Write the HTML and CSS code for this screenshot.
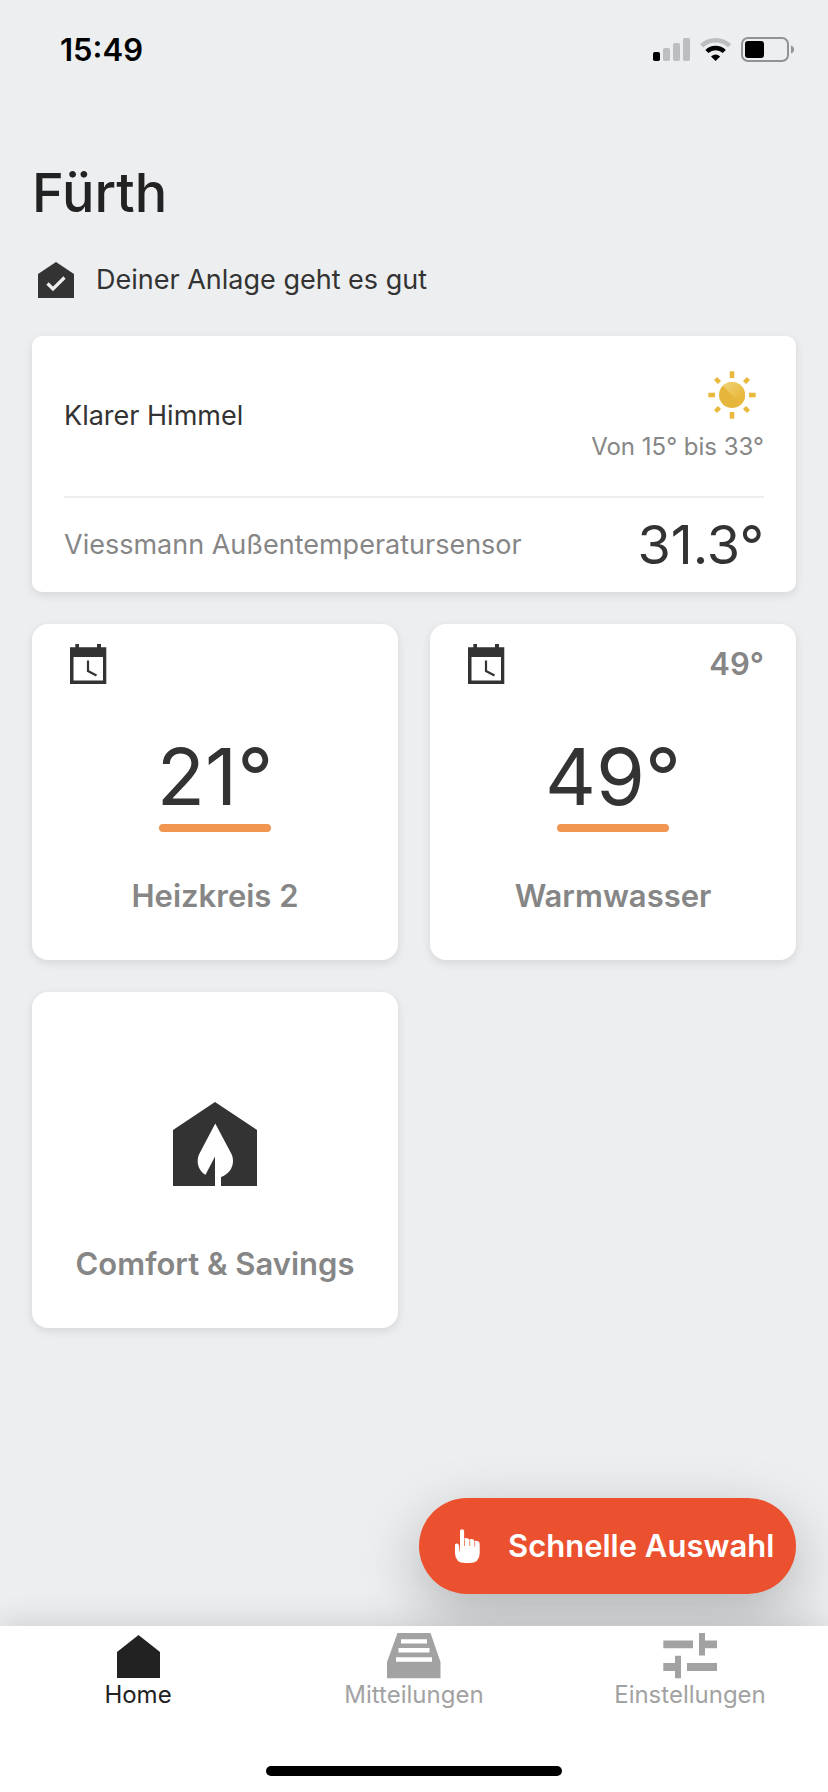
FILE: index.html
```html
<!DOCTYPE html>
<html lang="de">
<head>
<meta charset="utf-8">
<title>Fürth</title>
<link rel="stylesheet" href="styles.css">
</head>
<body>
<div class="screen">
  <header class="status">
    <span class="clock">15:49</span>
    <svg class="status-icons" width="142" height="26" viewBox="0 0 142 26">
      <rect x="0" y="15" width="7" height="9" rx="1.8" fill="#000"/>
      <g fill="#bdbec0"><rect x="10" y="11" width="7" height="13" rx="1.8"/><rect x="20" y="6" width="7" height="18" rx="1.8"/><rect x="30" y="1" width="7" height="23" rx="1.8"/></g>
      <path d="M48.6 8.8A20.4 20.4 0 0 1 76.6 8.8" fill="none" stroke="#bdbec0" stroke-width="4.6"/>
      <path d="M53.9 14.5A12.6 12.6 0 0 1 71.3 14.5" fill="none" stroke="#000" stroke-width="4.4"/>
      <path d="M58 19.4Q62.6 15.8 67.200 19.400L62.600 24Z" fill="#000"/>
      <rect x="89" y="1" width="46" height="23" rx="6" fill="none" stroke="#919294" stroke-width="2"/>
      <rect x="92" y="4" width="19" height="17" rx="3" fill="#000"/>
      <path d="M138 8.500Q141 9.500 141 12.500T138 16.500Z" fill="#919294"/>
    </svg>
  </header>

  <main class="content">
    <h1 class="title">Fürth</h1>
    <div class="health">
      <svg width="36" height="36" viewBox="0 0 36 36"><path d="M0 12L18 0L36 12V36H0Z" fill="#333"/><path d="M9.500 21.500L15 27L26.500 15.500" fill="none" stroke="#edeef0" stroke-width="3.200"/></svg>
      <span class="health-text">Deiner Anlage geht es gut</span>
    </div>

    <section class="card weather">
      <div class="weather-top">
        <span class="condition">Klarer Himmel</span>
        <div class="forecast">
          <svg class="sun" width="48" height="48" viewBox="0 0 48 48">
            <defs><linearGradient id="shine" x1="0" y1="0" x2="1" y2="1"><stop offset="0" stop-color="#f1d27a"/><stop offset=".75" stop-color="#e9b93e"/></linearGradient></defs>
            <circle cx="24" cy="24" r="13" fill="#e6b63c"/>
            <path d="M14.800 14.800A13 13 0 0 1 33.200 33.200Z" fill="url(#shine)"/>
            <g fill="#e9b93e">
              <path id="ray" d="M21.700 0.300H26.300V7H21.700Z"/>
              <use href="#ray" transform="rotate(90 24 24)"/><use href="#ray" transform="rotate(180 24 24)"/><use href="#ray" transform="rotate(270 24 24)"/>
              <path id="ray2" d="M21.800 0.700H26.200V6.300H21.800Z" transform="rotate(45 24 24)"/>
              <use href="#ray2" transform="rotate(90 24 24)"/><use href="#ray2" transform="rotate(180 24 24)"/><use href="#ray2" transform="rotate(270 24 24)"/>
            </g>
          </svg>
          <span class="range">Von 15° bis 33°</span>
        </div>
      </div>
      <div class="weather-bottom">
        <span class="sensor">Viessmann Außentemperatursensor</span>
        <span class="outdoor">31.3<span class="deg">°</span></span>
      </div>
    </section>

    <div class="grid">
      <section class="card tile">
        <div class="tile-head">
          <svg width="37" height="40" viewBox="0 0 37 40"><path fill-rule="evenodd" d="M0 3.300H5.300V0H9V3.300H27V0H31V3.300H36.300V40H0ZM3.500 13V36.500H33V13Z" fill="#333"/><path d="M18 16.500V27L26.500 31.500" fill="none" stroke="#333" stroke-width="2.200"/></svg>
        </div>
        <div class="reading">21<span class="deg">°</span></div>
        <div class="bar"></div>
        <div class="label heat">Heizkreis 2</div>
      </section>
      <section class="card tile">
        <div class="tile-head">
          <svg width="37" height="40" viewBox="0 0 37 40"><path fill-rule="evenodd" d="M0 3.300H5.300V0H9V3.300H27V0H31V3.300H36.300V40H0ZM3.500 13V36.500H33V13Z" fill="#333"/><path d="M18 16.500V27L26.500 31.500" fill="none" stroke="#333" stroke-width="2.200"/></svg>
          <span class="target">49°</span>
        </div>
        <div class="reading">49<span class="deg">°</span></div>
        <div class="bar"></div>
        <div class="label water">Warmwasser</div>
      </section>
      <section class="card tile eco">
        <svg class="eco-icon" width="84" height="84" viewBox="0 0 84 84"><path d="M0 28L42 0L84 28V84H48V75C55 72.500 60 66.500 60 59C60 56 59.200 53 57.700 50.500L42.300 21.500L27 50.500C25.500 53 24.700 56 24.700 59C24.700 65 27.500 70 32.500 72.800L42 54.500V84H0Z" fill="#333"/></svg>
        <div class="label comfort">Comfort &amp; Savings</div>
      </section>
    </div>
  </main>

  <button class="quick">
    <svg width="25" height="34" viewBox="0 0 25 34"><path d="M5 2.200A2.050 2.050 0 0 1 9.100 2.200V10.200Q9.500 8.800 11.700 9Q14.200 9.300 14.500 11Q15 9.800 17 10.100Q19.300 10.500 19.600 12.600Q20 11.700 22 11.900Q24.700 12.300 24.700 15V24Q24.700 34 14.500 34H10.500Q0 34 0 24V16Q0 14.300 1.800 14.500Q3.500 14.700 4 16.500L4.500 22.500H5Z" fill="#fff"/><path d="M9.500 10.500V17M14.700 11.500V17M19.700 12.500V17.500" stroke="#eb512f" stroke-width=".7"/></svg>
    <span class="quick-text">Schnelle Auswahl</span>
  </button>

  <nav class="tabs">
    <div class="tab active">
      <svg width="56" height="47" viewBox="0 0 56 47"><path d="M7 19L28.500 2L50 19V45H7Z" fill="#222"/></svg>
      <span class="home">Home</span>
    </div>
    <div class="tab">
      <svg width="56" height="47" viewBox="0 0 56 47"><path d="M12 0H43.500L55 29V45.300H1V29L12 0Z" fill="#a2a2a2" visibility="hidden"/><path d="M11.500 0H44.500L54.500 29V45.300H1V29Z" fill="#a2a2a2"/><path d="M15 6.200H41V10.500H15ZM12.500 15H43.500V19.500H12.500ZM10 24.300H46V28.700H10Z" fill="#fff"/></svg>
      <span class="messages">Mitteilungen</span>
    </div>
    <div class="tab">
      <svg width="56" height="47" viewBox="0 0 56 47"><path d="M1.300 7.500H31V15.300H1.300ZM37 0H43V7.500H55V15.300H43V22.600H37ZM13 22.700H19V45.300H13V38H1.300V30H13ZM25 30H55V38H25Z" fill="#a2a2a2"/></svg>
      <span class="settings">Einstellungen</span>
    </div>
    <div class="home-indicator"></div>
  </nav>
</div>
</body>
</html>
```
FILE: styles.css
```css
* { box-sizing: border-box; }
body { margin: 0; font-family: Inter, "Liberation Sans", sans-serif; background: #edeef0; color: #333; }
span { white-space: nowrap; }
svg { display: block; flex: none; }

.screen { position: relative; display: flex; flex-direction: column; width: 828px; height: 1792px; overflow: hidden; background: #edeef0; }

.status { display: flex; justify-content: space-between; align-items: flex-start; height: 100px; padding: 30px 33px 0 60px; color: #000; }
.clock { font-size: 31px; line-height: 40px; font-weight: 600; }
.status-icons { margin-top: 7px; }

.content { flex: 1; padding: 60px 32px 0; }
.title { margin: 0; font-size: 54px; line-height: 66px; font-weight: 500; color: #222; }
.health { display: flex; align-items: center; gap: 22px; height: 36px; margin: 36px 0 38px; padding-left: 6px; }
.health-text { font-size: 27px; line-height: 36px; }

.card { background: #fff; border-radius: 16px; box-shadow: 0 3px 10px rgba(0, 0, 0, .1); }
.weather { height: 256px; padding: 0 32px; border-radius: 10px; }
.weather-top { display: flex; justify-content: space-between; align-items: center; height: 162px; border-bottom: 2px solid #edeef0; }
.condition { font-size: 27px; line-height: 36px; }
.forecast { display: flex; flex-direction: column; align-items: flex-end; }
.sun { margin: 0 8px 13px 0; }
.range { font-size: 24px; line-height: 30px; color: #868686; }
.weather-bottom { display: flex; justify-content: space-between; align-items: center; height: 94px; }
.sensor { font-size: 27px; line-height: 36px; color: #868686; }
.outdoor { font-size: 54px; line-height: 66px; }

.grid { display: grid; grid-template-columns: 366px 366px; gap: 32px; margin-top: 32px; }
.tile { display: flex; flex-direction: column; align-items: center; height: 336px; padding-top: 20px; }
.tile-head { display: flex; justify-content: space-between; width: 100%; height: 40px; padding: 0 32px 0 38px; }
.target { font-size: 31px; line-height: 40px; font-weight: 600; color: #868686; }
.reading { margin-top: 44px; font-size: 79px; line-height: 96px; }
.bar { width: 112px; height: 8px; border-radius: 4px; background: #f09650; }
.label { margin-top: 44px; font-size: 31px; line-height: 40px; font-weight: 600; color: #868686; }
.eco { padding-top: 110px; }
.eco-icon { margin-bottom: 14px; }

.quick { position: absolute; left: 419px; top: 1498px; display: flex; align-items: center; width: 377px; height: 96px; padding: 0 0 0 36px; gap: 28px; border: 0; border-radius: 48px; background: #eb512f; box-shadow: 0 20px 60px rgba(0, 0, 0, .25); color: #fff; font: 600 31px/40px Inter, "Liberation Sans", sans-serif; }

.tabs { position: relative; display: grid; grid-template-columns: repeat(3, 276px); align-content: start; height: 166px; background: #fff; box-shadow: 0 0 32px rgba(0, 0, 0, .16); }
.tab { display: flex; flex-direction: column; align-items: center; padding-top: 7px; font-size: 24px; line-height: 30px; color: #a2a2a2; }
.active { color: #222; }
.home-indicator { grid-column: 1 / -1; justify-self: center; width: 296px; height: 10px; margin-top: 56px; border-radius: 5px; background: #000; }
```
